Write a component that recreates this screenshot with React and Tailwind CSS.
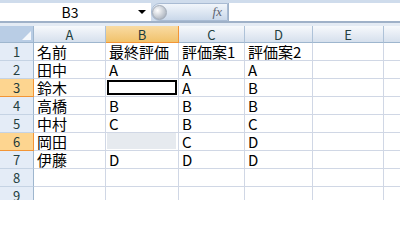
const cols = [
  { key: "A", w: "w-[72px]" },
  { key: "B", w: "w-[73px]" },
  { key: "C", w: "w-[66px]" },
  { key: "D", w: "w-[68px]" },
  { key: "E", w: "w-[71px]" },
];

const rows = [
  ["名前", "最終評価", "評価案1", "評価案2", ""],
  ["田中", "A", "A", "A", ""],
  ["鈴木", "", "A", "B", ""],
  ["高橋", "B", "B", "B", ""],
  ["中村", "C", "B", "C", ""],
  ["岡田", "", "C", "D", ""],
  ["伊藤", "D", "D", "D", ""],
  ["", "", "", "", ""],
  ["", "", "", "", ""],
];

const font = { fontFamily: '"Noto Sans CJK JP", "Liberation Sans", sans-serif' };

function FormulaBar() {
  return (
    <div className="flex flex-col h-[26px] bg-[#cfdcec]">
      <div className="h-[3px]" />
      <div className="flex h-[18px]">
        <div className="w-[151px] bg-white flex items-center">
          <span className="flex-1 text-center text-[14px] text-black leading-[16px] pl-[2px]">B3</span>
          <span className="w-0 h-0 mr-[5px] border-l-[4px] border-r-[4px] border-t-[4px] border-l-transparent border-r-transparent border-t-black" />
        </div>
        <div className="w-[77px] flex items-center justify-between rounded-l-full border border-[#a9bbd3] bg-gradient-to-b from-[#f2f6fb] to-[#cad8ea] pr-[5px]">
          <span className="w-[15px] h-[15px] rounded-full bg-[radial-gradient(circle_at_35%_35%,#ffffff,#b5bcc6_70%,#8f98a5)] border border-[#a3acb8]" />
          <span className="text-[13px] italic text-[#5e6470] leading-[14px]" style={{ fontFamily: '"Liberation Serif", serif' }}>
            fx
          </span>
        </div>
        <div className="flex-1 bg-white border-l border-[#9fb2ca]" />
      </div>
      <div className="h-[2px] bg-[#9fb1c8]" />
      <div className="h-[3px] bg-[#e4ebf4]" />
    </div>
  );
}

export default function App() {
  return (
    <div className="w-[400px] h-[200px] overflow-hidden bg-white" style={font}>
      <FormulaBar />

      {/* column headers */}
      <div className="flex h-[17px]">
        <div className="w-[34px] shrink-0 bg-[#b9cde5] border-r border-b border-[#9eb6ce] flex items-end justify-end p-[2px]">
          <span className="w-0 h-0 border-b-[9px] border-l-[9px] border-b-[#f5f8fc] border-l-transparent" />
        </div>
        {cols.map((c) => (
          <div
            key={c.key}
            className={`${c.w} shrink-0 flex items-center justify-center text-[13px] leading-[15px] border-b ${
              c.key === "B"
                ? "bg-gradient-to-b from-[#f9dba3] to-[#f1c26a] border-r border-[#f29536] border-b-[#f29536] text-[#1d3b3b]"
                : "bg-gradient-to-b from-[#f7f9fc] to-[#d6e0ed] border-r border-[#aec2d8] border-b-[#9eb6ce] text-[#243f3f]"
            }`}
          >
            {c.key}
          </div>
        ))}
        <div className="flex-1 bg-gradient-to-b from-[#f7f9fc] to-[#d6e0ed] border-b border-[#9eb6ce]" />
      </div>

      {/* rows */}
      {rows.map((r, i) => {
        const n = i + 1;
        const sel = n === 3 || n === 6;
        return (
          <div key={n} className="flex h-[18px]">
            <div
              className={`w-[34px] shrink-0 flex items-center justify-center text-[13px] leading-[15px] border-r border-b ${
                sel
                  ? "bg-[#fdd590] border-[#f29536] border-b-[#f29536] text-[#1d3b3b]"
                  : "bg-[#e4ecf7] border-[#9eb6ce] border-b-[#c5d3e4] text-[#243f3f]"
              }`}
            >
              {n}
            </div>
            {cols.map((c, j) => (
              <div
                key={c.key}
                className={`${c.w} shrink-0 flex border-r border-b border-[#d0d7e5] text-[15px] text-black`}
              >
                {n === 3 && c.key === "B" ? (
                  <div className="flex-1 m-[1px] border-2 border-black" />
                ) : n === 6 && c.key === "B" ? (
                  <div className="flex-1 ml-[1px] mr-[2px] mb-[1px] bg-[#e6eaef]" />
                ) : (
                  <span className="self-center pl-[3px] leading-[16px] whitespace-nowrap">{r[j]}</span>
                )}
              </div>
            ))}
            <div className="flex-1 border-b border-[#d0d7e5]" />
          </div>
        );
      })}
    </div>
  );
}
